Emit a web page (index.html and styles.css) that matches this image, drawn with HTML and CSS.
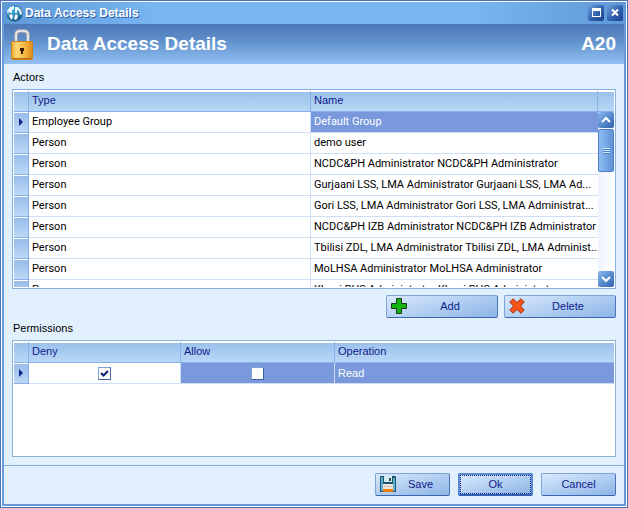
FILE: index.html
```html
<!DOCTYPE html>
<html lang="en">
<head>
<meta charset="utf-8">
<title>Data Access Details</title>
<link rel="stylesheet" href="styles.css">
</head>
<body>
<main class="window">
  <header class="titlebar">
    <svg class="app-icon" width="17" height="17" viewBox="0 0 17 17" aria-hidden="true">
      <defs><radialGradient id="globe" cx="0.4" cy="0.3" r="0.8"><stop offset="0" stop-color="#3fb0e0"/><stop offset="1" stop-color="#0d4a78"/></radialGradient></defs>
      <circle cx="8.500" cy="8.500" r="8" fill="url(#globe)"/>
      <path d="M1 6L4 2L8 1L8 4L6 5L6 8L4 8L3 6L2 10ZM9 2L12 2L15 5L16 9L14 10L13 6L11 5L11 8L9 8ZM3 10L6 9L7 11L6 15L4 13ZM9 10L11 9L12 12L10 15L8 14Z" fill="#eefaff"/>
    </svg>
    <span class="title">Data Access Details</span>
    <button class="caption-button" type="button" aria-label="Maximize">
      <svg width="16" height="16" viewBox="0 0 16 16"><path d="M4 3H13V12H4ZM5 6V11H12V6Z" fill="#fff" fill-rule="evenodd"/></svg>
    </button>
    <button class="caption-button" type="button" aria-label="Close">
      <svg width="16" height="16" viewBox="0 0 16 16"><path d="M5 4.500L11 10.500M11 4.500L5 10.500" stroke="#fff" stroke-width="2"/></svg>
    </button>
  </header>

  <div class="banner">
    <svg class="lock" width="22" height="31" viewBox="0 0 22 31" aria-hidden="true">
      <defs><linearGradient id="gold" x2="1"><stop offset="0" stop-color="#e9a52c"/><stop offset=".25" stop-color="#ffd978"/><stop offset=".65" stop-color="#f5b63c"/><stop offset="1" stop-color="#d98a1c"/></linearGradient></defs>
      <path d="M5 15V6Q5 2 9 2H13Q17 2 17 6V15" fill="none" stroke="#9b9da8" stroke-width="4"/>
      <path d="M5 15V6Q5 2 9 2H13Q17 2 17 6V15" fill="none" stroke="#e4e4ea" stroke-width="2"/>
      <rect x="0.500" y="12.500" width="21" height="18" rx="1" fill="url(#gold)" stroke="#d0851c"/>
      <path d="M1 29.500H21" stroke="#b86c14"/>
      <path d="M9 19H13V22H12V25H10V22H9Z" fill="#3a1c08"/>
    </svg>
    <h1>Data Access Details</h1>
    <span class="code">A20</span>
  </div>

  <div class="content">
    <h2>Actors</h2>
    <div class="grid actors">
      <div class="viewport">
        <table class="actors-table">
          <colgroup><col class="c-mark"><col class="c-type"><col><col class="c-scroll"></colgroup>
          <thead><tr><th></th><th>Type</th><th>Name</th><th></th></tr></thead>
          <tbody>
            <tr><td class="mark"><i class="arrow"></i></td><td>Employee Group</td><td class="selected">Default Group</td></tr>
            <tr><td class="mark"></td><td>Person</td><td>demo user</td></tr>
            <tr><td class="mark"></td><td>Person</td><td>NCDC&amp;PH Administrator NCDC&amp;PH Administrator</td></tr>
            <tr><td class="mark"></td><td>Person</td><td>Gurjaani LSS, LMA Administrator Gurjaani LSS, LMA Ad...</td></tr>
            <tr><td class="mark"></td><td>Person</td><td>Gori LSS, LMA Administrator Gori LSS, LMA Administrat...</td></tr>
            <tr><td class="mark"></td><td>Person</td><td>NCDC&amp;PH IZB Administrator NCDC&amp;PH IZB Administrator</td></tr>
            <tr><td class="mark"></td><td>Person</td><td>Tbilisi ZDL, LMA Administrator Tbilisi ZDL, LMA Administ...</td></tr>
            <tr><td class="mark"></td><td>Person</td><td>MoLHSA Administrator MoLHSA Administrator</td></tr>
            <tr><td class="mark"></td><td>Person</td><td>Khoni RHS Administrator Khoni RHS Administrator</td></tr>
          </tbody>
        </table>
      </div>
      <div class="scrollbar">
        <button type="button" class="scroll-button" aria-label="Scroll up"><svg width="16" height="16" viewBox="0 0 16 16"><path d="M4 10L8 6L12 10" fill="none" stroke="#fff" stroke-width="2"/></svg></button>
        <div class="thumb"><i class="grip"></i></div>
        <button type="button" class="scroll-button down" aria-label="Scroll down"><svg width="16" height="16" viewBox="0 0 16 16"><path d="M4 6L8 10L12 6" fill="none" stroke="#fff" stroke-width="2"/></svg></button>
      </div>
    </div>

    <div class="actions">
      <button type="button" class="button wide">
        <svg width="16" height="16" viewBox="0 0 16 16" aria-hidden="true"><path d="M5.500 .5H10.500V5.500H15.500V10.500H10.500V15.500H5.500V10.500H.5V5.500H5.500Z" fill="#14b414" stroke="#153c15"/></svg>
        <span>Add</span>
      </button>
      <button type="button" class="button wide">
        <svg width="16" height="16" viewBox="0 0 16 16" aria-hidden="true"><path d="M4 .8L8 4.500L12 .8L15.200 4L11.500 8L15.200 12L12 15.200L8 11.500L4 15.200L.8 12L4.500 8L.8 4Z" fill="#f8541c" stroke="#a02c10"/></svg>
        <span>Delete</span>
      </button>
    </div>

    <h2>Permissions</h2>
    <div class="grid permissions">
      <table>
        <colgroup><col class="c-mark"><col class="c-deny"><col class="c-allow"><col></colgroup>
        <thead><tr><th></th><th>Deny</th><th>Allow</th><th>Operation</th></tr></thead>
        <tbody><tr>
          <td class="mark"><i class="arrow"></i></td>
          <td class="check"><input type="checkbox" checked aria-label="Deny"></td>
          <td class="check selected"><input type="checkbox" aria-label="Allow"></td>
          <td class="selected">Read</td>
        </tr></tbody>
      </table>
    </div>
  </div>

  <footer class="footer">
    <button type="button" class="button">
      <svg width="16" height="16" viewBox="0 0 16 16" aria-hidden="true"><path d="M0 0H15L16 1V16H0Z" fill="#1d5268"/><path d="M1 1H3V15H1ZM13 2H15V15H13Z" fill="#5fb4d4"/><path d="M4 0H12V6H4Z" fill="#d8eaf0"/><path d="M9 2H11V5H9Z" fill="#1d5268"/><path d="M3 8H13V13H3Z" fill="#eee4e0"/><path d="M3 10H13V11H3Z" fill="#cfc4c0"/><path d="M3 13H13V16H3Z" fill="#f07c08"/></svg>
      <span>Save</span>
    </button>
    <button type="button" class="button default"><span>Ok</span></button>
    <button type="button" class="button"><span>Cancel</span></button>
  </footer>
</main>
</body>
</html>
```
FILE: styles.css
```css
* { box-sizing: border-box; }

body {
  margin: 0;
  font: 11px/14px "Liberation Sans", Arial, sans-serif;
  color: #000;
}

button { padding: 0; border: 0; font: inherit; }
svg { display: block; }

.window {
  display: flex;
  flex-direction: column;
  min-height: 100vh;
  border: 1px solid #4a72b8;
  background: #e2effd;
  box-shadow: inset 0 0 0 1px #fff, inset 0 0 0 3px #659ad4;
  padding: 1px 3px 3px;
}

.titlebar {
  display: flex;
  align-items: center;
  gap: 3px;
  height: 22px;
  margin: 0 -2px;
  padding: 0 3px 0 4px;
  background: linear-gradient(90deg, #5f98d6, #7ab6f4 25%, #7ab6f4 75%, #5f98d6);
}

.title {
  flex: 1;
  margin-left: -1px;
  color: #fff;
  font-size: 12px;
  font-weight: bold;
  text-shadow: 1px 1px 0 #2c5ca4;
}

.caption-button {
  width: 16px;
  height: 16px;
  border-radius: 2px;
  background: linear-gradient(135deg, #6d9fda, #2c5caa 60%, #1c4290);
}

.banner {
  display: flex;
  align-items: center;
  height: 40px;
  padding: 0 8px 0 7px;
  background: linear-gradient(#4d77b7, #5e8fca 40%, #93c0f3);
  color: #fff;
  font-size: 19px;
  font-weight: bold;
  line-height: 24px;
}

.banner h1 { flex: 1; margin: 0 0 0 14px; font-size: inherit; line-height: inherit; }

.content {
  flex: 1;
  display: flex;
  flex-direction: column;
  padding: 6px 8px 8px;
}

h2 { margin: 0 1px 5px; font: inherit; }

.grid {
  display: flex;
  border: 1px solid #86b1e0;
  padding: 1px;
  background: #fff;
}

.actors { position: relative; height: 200px; }
.viewport { flex: 1; overflow: hidden; }
.permissions { flex: 1; align-items: flex-start; border-color: #8fb2d4; }

table {
  width: 100%;
  table-layout: fixed;
  border-collapse: separate;
  border-spacing: 0;
}

.c-mark { width: 15px; }
.c-type { width: 47%; }
.c-scroll { width: 16px; }
.c-deny { width: 152px; }
.c-allow { width: 154px; }

th, td {
  height: 21px;
  padding: 0 0 0 3px;
  overflow: hidden;
  border-right: 1px solid #cfdff3;
  border-bottom: 1px solid #cfdff3;
  font-weight: normal;
  text-align: left;
  white-space: nowrap;
}

.actors-table td { font-family: Roboto, "Liberation Sans", sans-serif; }

th {
  border-color: #84b2e6;
  padding-bottom: 2px;
  background: linear-gradient(#fff 1px, #9bc1ec 1px, #b9d7f6);
  color: #10208a;
}

th:last-child, td:last-child { border-right: 0; }

.mark {
  padding: 0;
  border-color: #84b2e6;
  background: linear-gradient(#fff 1px, #98bdea 1px, #bcd8f6);
}

.arrow {
  display: block;
  width: 4px;
  margin-left: 5px;
  border: 4px solid transparent;
  border-right: 0;
  border-left-color: #10208a;
}

.selected { background: #7999dc; color: #fff; }

.check { padding: 0; text-align: center; }

input[type="checkbox"] {
  appearance: none;
  display: block;
  width: 13px;
  height: 13px;
  margin: 0 auto;
  border: 1px solid #5579ac;
  border-color: #7ca4d0 #3a62a0 #3a62a0 #7ca4d0;
  background: #fff;
}

input[type="checkbox"]:checked {
  background: #fff url("data:image/svg+xml,%3Csvg xmlns='http://www.w3.org/2000/svg' viewBox='0 0 11 11'%3E%3Cpath d='M2 5L4.500 7.500L9 3' fill='none' stroke='%2310207a' stroke-width='2'/%3E%3C/svg%3E");
}

.scrollbar {
  position: absolute;
  inset: 22px 1px 1px auto;
  display: flex;
  flex-direction: column;
  width: 16px;
  background: linear-gradient(90deg, #edf4fe, #fff);
}

.scroll-button {
  height: 16px;
  border-radius: 2px;
  background: linear-gradient(135deg, #8bb8ee, #4f83c8 60%, #3462ac);
}

.scroll-button.down { margin-top: auto; }

.thumb {
  display: flex;
  align-items: center;
  justify-content: center;
  height: 43px;
  margin-top: 1px;
  border: 1px solid #4d7cc4;
  border-radius: 2px;
  background: linear-gradient(90deg, #8fbdf2, #5f93d8);
}

.grip {
  width: 7px;
  height: 6px;
  background: repeating-linear-gradient(#d6e8fc 0 1px, #4a7cc4 1px 2px);
}

.actions {
  display: flex;
  justify-content: flex-end;
  gap: 6px;
  margin: 6px 0 3px;
}

.button {
  display: flex;
  align-items: center;
  width: 75px;
  height: 23px;
  padding: 0 4px 1px;
  border: 1px solid #7ea4d8;
  border-right-color: #4d74b8;
  border-bottom-color: #3d66b0;
  border-radius: 2px;
  background: linear-gradient(165deg, #d8e8fb, #b2cff2 50%, #8db4e6);
  color: #10208a;
}

.button span { flex: 1; text-align: center; }
.button.wide { width: 112px; }

.button.default {
  border: 2px solid #5b8ad0;
  border-bottom-color: #3260b4;
  padding: 0;
}

.button.default span {
  align-self: stretch;
  border: 1px dotted #10208a;
  line-height: 17px;
}

.footer {
  display: flex;
  align-items: center;
  justify-content: flex-end;
  gap: 8px;
  height: 39px;
  padding: 0 8px 1px;
  border-top: 1px solid #84b2e6;
}
```
